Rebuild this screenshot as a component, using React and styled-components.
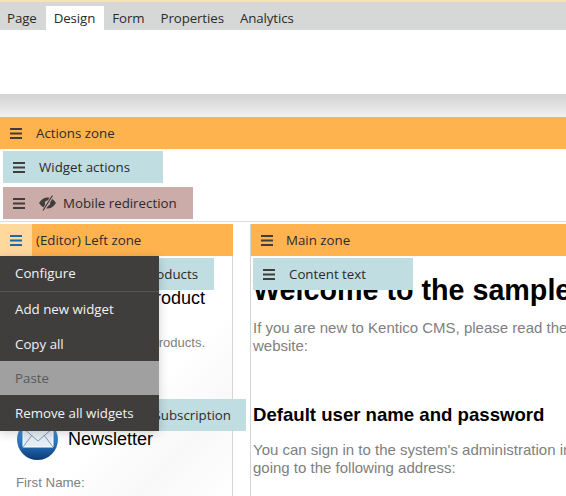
import React from "react";
import styled, { createGlobalStyle } from "styled-components";

const Global = createGlobalStyle`
  html, body { margin: 0; padding: 0; background: #fff; overflow: hidden; }
  body { width: 566px; height: 496px; font-family: "Open Sans", "Liberation Sans", sans-serif; }
`;

const Page = styled.div`
  width: 566px;
  height: 496px;
  overflow: hidden;
  position: relative;
  background: #fff;
`;
const TabBar = styled.div`
  height: 28px;
  border-top: 2px solid #f5e3b5;
  background: #d6d8d8;
  display: flex;
  align-items: flex-end;
`;
const Tab = styled.div`
  height: 24px;
  line-height: 24px;
  padding: 0 ${(p) => p.$right ?? 8}px 0 ${(p) => p.$left ?? 8}px;
  background: ${(p) => (p.$active ? "#fff" : "transparent")};
  font-size: 13.3px;
  letter-spacing: -0.1px;
  color: #2b2b2b;
`;
const HeaderSpace = styled.div`
  height: 64px;
`;
const Shade = styled.div`
  height: 23px;
  background: linear-gradient(#d2d2d2, #f1f1f1);
`;
const ZoneBar = styled.div`
  height: 32px;
  background: #ffb34f;
  display: flex;
  align-items: center;
  font-size: 13.3px;
  color: #2b2b2b;
`;
const Handle = styled.div`
  width: ${(p) => p.$w || 32}px;
  height: 100%;
  flex: none;
  display: flex;
  align-items: center;
  justify-content: center;
  background: ${(p) => p.$bg || "transparent"};
`;
const Label = styled.span`
  margin-left: 4px;
  white-space: nowrap;
`;
const WidgetBar = styled.div`
  height: 32px;
  width: ${(p) => p.$w}px;
  background: ${(p) => p.$bg || "#c0dde1"};
  display: flex;
  align-items: center;
  font-size: 13.3px;
  color: #2b2b2b;
  white-space: nowrap;
  justify-content: ${(p) => (p.$end ? "flex-end" : "flex-start")};
  padding-right: ${(p) => p.$end || 0}px;
  box-sizing: border-box;
`;
const ActionWidgets = styled.div`
  padding: 2px 3px;
  display: flex;
  flex-direction: column;
  gap: 4px;
  border-bottom: 1px solid #dcdcdc;
`;
const Columns = styled.div`
  margin-top: 2px;
  display: flex;
  gap: 17px;
  height: 272px;
`;
const LeftColumn = styled.div`
  width: 233px;
  flex: none;
  position: relative;
  box-sizing: border-box;
  border-right: 1px solid #d4d4d4;
`;
const MainColumn = styled.div`
  flex: 1;
  min-width: 0;
  position: relative;
  box-sizing: border-box;
  border-left: 1px solid #d4d4d4;
  overflow: hidden;
`;
const LeftBar = styled(ZoneBar)`
  width: 233px;
`;
const FloatingWidget = styled.div`
  position: absolute;
  left: ${(p) => p.$left}px;
  top: ${(p) => p.$top}px;
  z-index: 2;
`;
const Heading = styled.h1`
  margin: 0;
  font: bold 28.7px/32px "Liberation Sans", Arial, sans-serif;
  color: #000;
  white-space: nowrap;
`;
const SubHeading = styled.h2`
  margin: ${(p) => p.$top}px 0 0;
  font: bold 18.6px/22px "Liberation Sans", Arial, sans-serif;
  color: #000;
  white-space: nowrap;
`;
const Para = styled.p`
  margin: ${(p) => p.$top}px 0 0;
  font: 15px/18px "Liberation Sans", Arial, sans-serif;
  color: #808080;
  white-space: pre;
`;
const MainContent = styled.div`
  padding: 18px 0 0 2px;
  display: flex;
  flex-direction: column;
`;
const LeftContent = styled.div`
  position: relative;
  height: 240px;
  background: linear-gradient(135deg, #fff 60%, #f8f8f8 80%, #fff);
`;
const ProductTitle = styled.div`
  position: absolute;
  right: 27px;
  top: 31px;
  font: 18px/22px "Liberation Sans", Arial, sans-serif;
  color: #000;
  white-space: nowrap;
`;
const ProductText = styled.div`
  position: absolute;
  right: 27px;
  top: 79px;
  font: 13px/16px "Liberation Sans", Arial, sans-serif;
  color: #808080;
  white-space: nowrap;
`;
const NewsRow = styled.div`
  position: absolute;
  left: 17px;
  top: 163px;
  display: flex;
  align-items: flex-start;
  gap: 10px;
`;
const NewsTitle = styled.div`
  font: 18px/22px "Liberation Sans", Arial, sans-serif;
  color: #000;
  padding-top: 9px;
`;
const FieldLabel = styled.div`
  position: absolute;
  left: 16px;
  top: 219px;
  font: 13.3px/16px "Liberation Sans", Arial, sans-serif;
  color: #808080;
`;
const Menu = styled.div`
  position: absolute;
  left: 0;
  top: 32px;
  width: 159px;
  z-index: 5;
  background: #403e3d;
  box-shadow: 0 2px 10px rgba(0, 0, 0, 0.18);
  display: flex;
  flex-direction: column;
`;
const MenuItem = styled.div`
  height: ${(p) => p.$h}px;
  line-height: ${(p) => p.$h}px;
  padding-left: 15px;
  font-size: 13.3px;
  color: ${(p) => (p.$disabled ? "#595959" : "#f2f2f2")};
  background: ${(p) => (p.$disabled ? "#a0a0a0" : "#403e3d")};
  border-bottom: ${(p) => (p.$sep ? "1px solid #565452" : "none")};
`;
const EyeWrap = styled.span`
  display: inline-flex;
  margin: 0 7px 0 4px;
`;

const Burger = ({ color = "#403e3d" }) => (
  <svg width="12" height="11" viewBox="0 0 12 11" aria-hidden="true">
    <g fill={color}>
      <rect x="0" y="0" width="12" height="2" />
      <rect x="0" y="4.5" width="12" height="2" />
      <rect x="0" y="9" width="12" height="2" />
    </g>
  </svg>
);

const EyeSlash = () => (
  <svg width="17" height="16" viewBox="0 0 17 16" aria-hidden="true">
    <path d="M0 8C2.500 4 5.500 2.500 8.500 2.500S14.500 4 17 8C14.500 12 11.500 13.500 8.500 13.500S2.500 12 0 8Z" fill="#403e3d" />
    <circle cx="8.500" cy="8" r="2.600" fill="#cbaca8" />
    <path d="M14 0L4 16" stroke="#cbaca8" strokeWidth="3" />
    <path d="M13.500 0.500L4 15.500" stroke="#403e3d" strokeWidth="1.200" />
  </svg>
);

const MailIcon = () => (
  <svg width="41" height="41" viewBox="0 0 41 41" aria-hidden="true">
    <defs>
      <linearGradient id="mailBall" x1="0" y1="0" x2="0" y2="1">
        <stop offset="0%" stopColor="#5b9fd8" />
        <stop offset="55%" stopColor="#2a78bf" />
        <stop offset="85%" stopColor="#154f8f" />
        <stop offset="100%" stopColor="#0d3b70" />
      </linearGradient>
    </defs>
    <circle cx="20.500" cy="20.500" r="20.500" fill="url(#mailBall)" />
    <path d="M6 8h30v20H6z" fill="#e6edf3" stroke="#fff" strokeWidth="1" />
    <path d="M6 9L21 22L36 9M6 28L15 16M36 28L27 16" fill="none" stroke="#7f9cb8" strokeWidth="1" />
  </svg>
);

export default function App() {
  return (
    <Page>
      <Global />
      <TabBar>
        <Tab $left={7} $right={9}>Page</Tab>
        <Tab $active $right={9}>Design</Tab>
        <Tab>Form</Tab>
        <Tab>Properties</Tab>
        <Tab>Analytics</Tab>
      </TabBar>
      <HeaderSpace />
      <Shade />
      <ZoneBar>
        <Handle><Burger /></Handle>
        <Label>Actions zone</Label>
      </ZoneBar>
      <ActionWidgets>
        <WidgetBar $w={160}>
          <Handle><Burger /></Handle>
          <Label>Widget actions</Label>
        </WidgetBar>
        <WidgetBar $w={190} $bg="#cbaca8">
          <Handle><Burger /></Handle>
          <EyeWrap><EyeSlash /></EyeWrap>
          <span>Mobile redirection</span>
        </WidgetBar>
      </ActionWidgets>
      <Columns>
        <LeftColumn>
          <LeftBar>
            <Handle $bg="#ffd89e"><Burger color="#1b6aa5" /></Handle>
            <Label>(Editor) Left zone</Label>
          </LeftBar>
          <FloatingWidget $left={3} $top={34}>
            <WidgetBar $w={211} $end={16}>Featured products</WidgetBar>
          </FloatingWidget>
          <FloatingWidget $left={3} $top={175}>
            <WidgetBar $w={243} $end={15}>Newsletter Subscription</WidgetBar>
          </FloatingWidget>
          <LeftContent>
            <ProductTitle>Featured product</ProductTitle>
            <ProductText>See our products.</ProductText>
            <NewsRow>
              <MailIcon />
              <NewsTitle>Newsletter</NewsTitle>
            </NewsRow>
            <FieldLabel>First Name:</FieldLabel>
          </LeftContent>
          <Menu>
            <MenuItem $h={35} $sep>Configure</MenuItem>
            <MenuItem $h={35}>Add new widget</MenuItem>
            <MenuItem $h={34}>Copy all</MenuItem>
            <MenuItem $h={34} $disabled>Paste</MenuItem>
            <MenuItem $h={36}>Remove all widgets</MenuItem>
          </Menu>
        </LeftColumn>
        <MainColumn>
          <ZoneBar>
            <Handle $w={31}><Burger /></Handle>
            <Label>Main zone</Label>
          </ZoneBar>
          <FloatingWidget $left={2} $top={34}>
            <WidgetBar $w={160}>
              <Handle><Burger /></Handle>
              <Label>Content text</Label>
            </WidgetBar>
          </FloatingWidget>
          <MainContent>
            <Heading>Welcome to the sample site</Heading>
            <Para $top={13}>{"If you are new to Kentico CMS, please read the\nwebsite:"}</Para>
            <SubHeading $top={49}>Default user name and password</SubHeading>
            <Para $top={15}>{"You can sign in to the system's administration interface by\ngoing to the following address:"}</Para>
          </MainContent>
        </MainColumn>
      </Columns>
    </Page>
  );
}
